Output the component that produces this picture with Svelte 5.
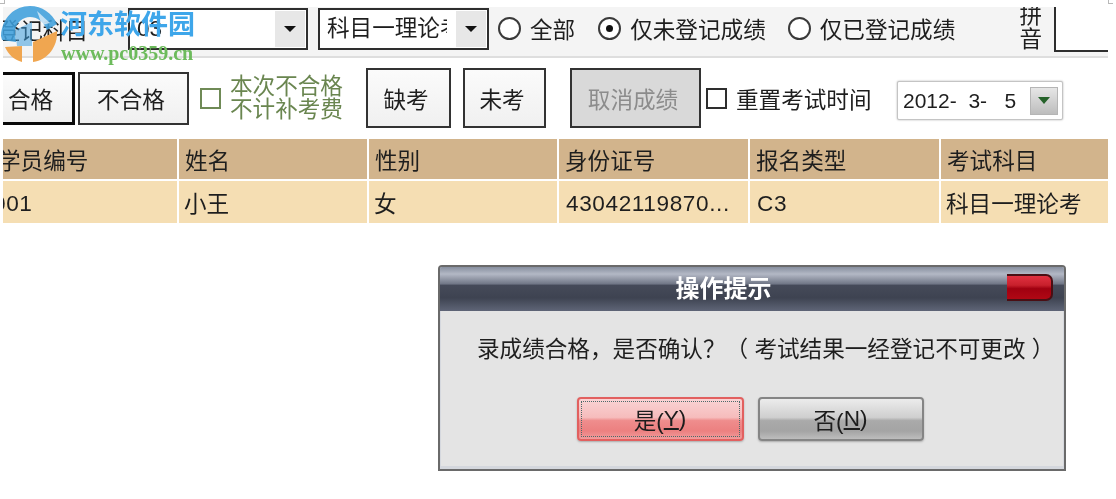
<script>
  const heads = ['学员编号', '姓名', '性别', '身份证号', '报名类型', '考试科目'];
  const cells = ['001', '小王', '女', '43042119870...', 'C3', '科目一理论考'];
  const latin = [true, false, false, true, true, false];
  const dateText = '2012-  3-   5';
</script>

<div class="page">
  <span class="mark left"></span>
  <span class="mark right"></span>

  <div class="toolbar">
    <div class="label"><span>登记科目</span></div>
    <div class="select first">
      <span class="value">03</span>
      <span class="drop"><i></i></span>
    </div>
    <div class="select second">
      <span class="value">科目一理论考</span>
      <span class="drop"><i></i></span>
    </div>
    <div class="radio r1"><span class="dot"></span>全部</div>
    <div class="radio r2"><span class="dot on"></span>仅未登记成绩</div>
    <div class="radio r3"><span class="dot"></span>仅已登记成绩</div>
    <div class="pinyin">拼<br />音</div>
    <div class="search"></div>
  </div>

  <div class="actions">
    <button class="btn pass">合格</button>
    <button class="btn fail">不合格</button>
    <div class="free">
      <span class="box green"></span>
      <span class="free-text">本次不合格<br />不计补考费</span>
    </div>
    <button class="btn tall absent">缺考</button>
    <button class="btn tall notyet">未考</button>
    <button class="btn tall cancel">取消成绩</button>
    <div class="reset"><span class="box"></span>重置考试时间</div>
    <div class="date">
      <span class="date-text">{dateText}</span>
      <span class="date-drop"><i></i></span>
    </div>
  </div>

  <div class="table">
    {#each heads as h, i}
      <div class="th" class:cut={i === 0}>{h}</div>
    {/each}
    {#each cells as c, i}
      <div class="td" class:latin={latin[i]} class:cut={i === 0}>{c}</div>
    {/each}
  </div>

  <div class="dialog">
    <div class="title">
      <span>操作提示</span>
      <span class="close"></span>
    </div>
    <div class="body">
      <p>录成绩合格，是否确认？（ 考试结果一经登记不可更改 ）</p>
      <div class="dialog-btns">
        <button class="dbtn yes"><span>是(<u>Y</u>)</span></button>
        <button class="dbtn no"><span>否(<u>N</u>)</span></button>
      </div>
    </div>
  </div>

  <div class="watermark">
    <svg class="logo" width="60" height="64" viewBox="0 0 60 64">
      <path d="M1 36 C2 17 15 6 30 6 C42 6 52 13 57 24 L47 30 C43 21 37 17 30 17 C23 17 17 22 15 30 L16 42 L2 40 Z" fill="#3f9fdc" opacity="0.88" />
      <path d="M15 30 L32 22 L32 46 L17 46 Z" fill="#3f9fdc" opacity="0.55" />
      <path d="M5 47 L22 46 L22 62 C14 60 8 54 5 47 Z" fill="#f0a650" />
      <path d="M33 42 L57 31 C58 46 48 60 33 62 Z" fill="#f0a650" />
      <path d="M37 11 L50 23 L42 25 Z" fill="#fff" opacity="0.65" />
    </svg>
    <div class="wm-name">河东软件园</div>
    <div class="wm-url">www.pc0359.cn</div>
  </div>
</div>

<style>
  :global(body) {
    margin: 0;
    background: #fff;
  }
  .page {
    position: relative;
    width: 1116px;
    height: 499px;
    box-sizing: border-box;
    padding: 7px 8px 0 3px;
    overflow: hidden;
    background: #fff;
    color: #1e1e1e;
    font-family: "Liberation Sans", "Noto Sans CJK SC", sans-serif;
    font-size: 22.6px;
    filter: blur(0.75px);
  }
  .mark {
    position: absolute;
    top: 0;
    width: 4px;
    height: 3px;
    border-bottom: 1px solid #b8b8b8;
  }
  .mark.left {
    left: 0;
    border-right: 1px solid #b8b8b8;
  }
  .mark.right {
    left: 1108px;
    border-left: 1px solid #b8b8b8;
  }

  .toolbar {
    display: flex;
    align-items: flex-start;
    height: 51px;
    background: #f4f4f4;
    border-bottom: 2px solid #dedede;
    box-sizing: border-box;
    overflow: hidden;
  }
  .label {
    width: 125px;
    height: 44px;
    display: flex;
    justify-content: flex-end;
    align-items: center;
    overflow: hidden;
    white-space: nowrap;
    flex: none;
  }
  .label span {
    padding-right: 40px;
  }
  .select {
    flex: none;
    display: flex;
    align-items: stretch;
    box-sizing: border-box;
    height: 42px;
    margin-top: 1px;
    background: #fff;
    border: 2px solid #2e2e2e;
    padding: 1px;
  }
  .select.first {
    width: 180px;
  }
  .select.second {
    width: 171px;
    margin-left: 10px;
  }
  .value {
    flex: 1;
    min-width: 0;
    overflow: hidden;
    white-space: nowrap;
    margin-left: 6px;
    margin-right: 9px;
    line-height: 35px;
  }
  .drop {
    flex: none;
    width: 30px;
    background: #e7e7e7;
    display: flex;
    align-items: center;
    justify-content: center;
  }
  .drop i {
    border: 6px solid transparent;
    border-top: 6px solid #111;
    border-bottom: 0;
  }
  .radio {
    flex: none;
    display: flex;
    align-items: center;
    gap: 9px;
    height: 42px;
    white-space: nowrap;
  }
  .r1 {
    margin-left: 9px;
  }
  .r2 {
    margin-left: 23px;
  }
  .r3 {
    margin-left: 22px;
  }
  .dot {
    position: relative;
    box-sizing: border-box;
    width: 23px;
    height: 23px;
    border: 2px solid #3a3a3a;
    border-radius: 50%;
    background: #fff;
  }
  .dot.on::after {
    content: "";
    position: absolute;
    left: 6px;
    top: 6px;
    width: 7px;
    height: 7px;
    border-radius: 50%;
    background: #111;
  }
  .pinyin {
    flex: none;
    width: 23px;
    margin: -3px 0 0 64px;
    line-height: 24px;
    text-align: center;
  }
  .search {
    flex: 1;
    height: 45px;
    margin-left: 12px;
    background: #fff;
    border-left: 2px solid #2e2e2e;
    border-bottom: 2px solid #2e2e2e;
    box-sizing: border-box;
  }

  .actions {
    display: flex;
    align-items: center;
    height: 60px;
    margin-top: 10px;
  }
  .btn {
    flex: none;
    box-sizing: border-box;
    padding: 0 5px 0 0;
    font: inherit;
    color: inherit;
    height: 53px;
    border: 2px solid #333;
    background: linear-gradient(#fbfbfb, #f0f0f0);
  }
  .pass {
    width: 72px;
    border-width: 3px;
    border-left: 0;
    border-color: #0a0a0a;
    padding-right: 14px;
  }
  .fail {
    width: 111px;
    margin-left: 3px;
  }
  .free {
    flex: none;
    display: flex;
    align-items: center;
    gap: 9px;
    margin-left: 11px;
    width: 166px;
  }
  .box {
    flex: none;
    box-sizing: border-box;
    width: 21px;
    height: 21px;
    border: 2px solid #2e2e2e;
    background: #fff;
  }
  .box.green {
    border-color: #6f8a56;
  }
  .free-text {
    color: #6a8650;
    line-height: 23px;
    white-space: nowrap;
  }
  .tall {
    height: 60px;
  }
  .absent {
    width: 85px;
  }
  .notyet {
    width: 83px;
    margin-left: 12px;
  }
  .cancel {
    width: 131px;
    margin-left: 24px;
    background: #d9d9d9;
    color: #8c8c8c;
  }
  .reset {
    flex: none;
    display: flex;
    align-items: center;
    gap: 9px;
    margin-left: 5px;
    white-space: nowrap;
    width: 191px;
  }
  .date {
    flex: none;
    display: flex;
    align-items: center;
    justify-content: space-between;
    box-sizing: border-box;
    width: 166px;
    height: 39px;
    margin-top: 5px;
    padding: 0 4px 0 5px;
    background: #fff;
    border: 1px solid #c4c4c4;
    border-radius: 2px;
    box-shadow: 0 0 2px #aaa;
    font-size: 21px;
  }
  .date-text {
    white-space: pre;
  }
  .date-drop {
    width: 28px;
    height: 28px;
    box-sizing: border-box;
    border: 1px solid #b5b5b5;
    background: linear-gradient(#e6e6e6, #bdbdbd);
    display: flex;
    align-items: center;
    justify-content: center;
  }
  .date-drop i {
    border: 6px solid transparent;
    border-top: 7px solid #25622a;
    border-bottom: 0;
  }

  .table {
    display: grid;
    grid-template-columns: 174px 188px 188px 189px 189px 167px;
    grid-template-rows: 40px 42px;
    gap: 2px;
    margin-top: 11px;
  }
  .th,
  .td {
    display: flex;
    align-items: center;
    white-space: nowrap;
    overflow: hidden;
    box-sizing: border-box;
  }
  .th {
    background: #d2b48c;
    padding-left: 6px;
  }
  .td {
    background: #f5deb3;
    padding-left: 5px;
  }
  .td.latin {
    padding: 3px 0 0 7px;
    letter-spacing: 0.6px;
  }
  .th.cut {
    padding-left: 0;
    text-indent: -5px;
  }
  .td.cut {
    padding-left: 0;
    text-indent: -10px;
  }

  .dialog {
    position: absolute;
    left: 438px;
    top: 265px;
    width: 628px;
    height: 206px;
    box-sizing: border-box;
    display: flex;
    flex-direction: column;
    border: 2px solid #6a6a6a;
    border-radius: 4px 4px 0 0;
    background: #e4e4e4;
    box-shadow: inset 0 0 0 1px #d5d8de;
  }
  .title {
    position: relative;
    flex: none;
    height: 44px;
    display: flex;
    align-items: center;
    justify-content: center;
    color: #fff;
    font-weight: 700;
    font-size: 24px;
    background: linear-gradient(#878f9f 0, #b3b8c5 16%, #727888 38%, #454a59 42%, #3e4351 70%, #5f6577 100%);
    border-radius: 2px 2px 0 0;
    padding-right: 57px;
    padding-bottom: 5px;
    box-sizing: border-box;
  }
  .close {
    position: absolute;
    left: 567px;
    top: 7px;
    width: 46px;
    height: 27px;
    box-sizing: border-box;
    border: 2px solid #4a0f14;
    border-left: 0;
    border-radius: 0 7px 7px 0;
    background: linear-gradient(#e03040 0, #c8202c 40%, #a00010 55%, #b00814 100%);
  }
  .body {
    flex: 1;
    display: flex;
    flex-direction: column;
    align-items: center;
    padding: 1px 3px 3px;
    border-bottom: 3px solid #d4d7dd;
  }
  .body p {
    margin: 21px 0 0;
    line-height: 33px;
    height: 33px;
    white-space: nowrap;
    align-self: flex-start;
    padding-left: 34px;
  }
  .dialog-btns {
    display: flex;
    gap: 14px;
    margin: 31px 4px 0 0;
  }
  .dbtn {
    box-sizing: border-box;
    width: 167px;
    height: 44px;
    padding: 2px;
    font: inherit;
    color: #1c1c1c;
    border-radius: 4px;
    box-shadow: 0 1px 2px #aaa;
  }
  .dbtn span {
    display: flex;
    align-items: center;
    justify-content: center;
    height: 100%;
    box-sizing: border-box;
  }
  .yes {
    border: 2px solid #e2605f;
    background: linear-gradient(#fad3d4 0, #f6bcbc 46%, #ef8d8d 54%, #ec8080 80%, #f19c9c 100%);
  }
  .yes span {
    border: 1px dotted #4d6a6a;
  }
  .no {
    width: 166px;
    border: 2px solid #858585;
    background: linear-gradient(#ececec 0, #cfcfcf 46%, #aaaaaa 54%, #a4a4a4 80%, #bdbdbd 100%);
  }

  .watermark {
    position: absolute;
    left: 0;
    top: 0;
    width: 210px;
    height: 70px;
  }
  .logo {
    position: absolute;
    left: 0;
    top: 0;
  }
  .wm-name {
    position: absolute;
    left: 60px;
    top: 7px;
    font-size: 27px;
    line-height: 36px;
    font-weight: 700;
    color: #3ea6ea;
    white-space: nowrap;
  }
  .wm-url {
    position: absolute;
    left: 61px;
    top: 43px;
    font-family: "Liberation Serif", serif;
    font-size: 20px;
    line-height: 20px;
    font-weight: 700;
    color: #6dbb5c;
    white-space: nowrap;
  }
</style>
